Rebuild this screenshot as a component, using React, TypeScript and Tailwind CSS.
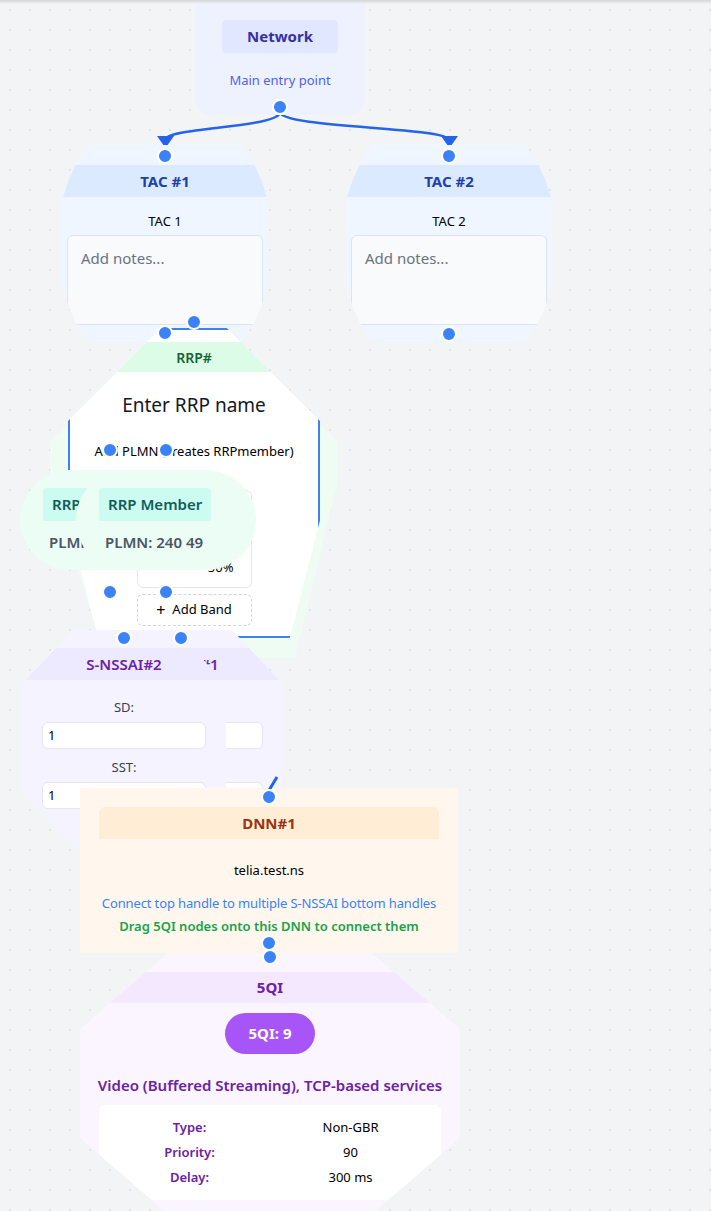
import React from 'react';

const handles: [number, number][] = [
  [280, 107],
  [165, 156],
  [449, 156],
  [165, 333],
  [449, 334],
  [194, 322],
  [110, 450],
  [166, 450],
  [110, 592],
  [166, 592],
  [124, 638],
  [181, 638],
  [269, 797],
  [269, 943],
  [270, 957],
];

function TacNode({ pos, title, label }: { pos: string; title: string; label: string }) {
  return (
    <div
      className={`absolute top-[145px] h-[197px] w-[206px] bg-[#eff6ff] [clip-path:ellipse(108px_140px_at_50%_50%)] ${pos}`}
    >
      <div className="mt-5 flex h-8 items-center justify-center bg-[#dbeafe] text-[15px] font-bold text-[#1e40af]">
        {title}
      </div>
      <div className="mt-[15px] text-center text-[13px] leading-[18px] text-black">{label}</div>
      <div className="mx-[5px] mt-[5px] h-[90px] rounded-md border border-[#dbe4f0] bg-[#f8fafc] px-[13px] pt-[12px] text-[15px] leading-5 text-[#6b7280]">
        Add notes...
      </div>
    </div>
  );
}

function MemberNode({ pos }: { pos: string }) {
  return (
    <div
      className={`absolute top-[470px] flex h-[100px] w-[180px] flex-col items-start rounded-full bg-[#ecfdf5] pl-[23px] pt-[18px] ${pos}`}
    >
      <div className="flex h-[33px] items-center rounded-t-sm bg-[#ccfbf1] px-[9px] text-[15px] font-semibold text-[#115e59]">
        RRP Member
      </div>
      <div className="mt-[11px] pl-[6px] text-[15px] font-semibold leading-5 text-[#4b5563]">PLMN: 240 49</div>
    </div>
  );
}

function SnssaiNode({ pos, title }: { pos: string; title: string }) {
  return (
    <div
      className={`absolute top-[630px] h-[217px] w-[204px] bg-[#f5f3ff] [clip-path:polygon(25%_0,75%_0,100%_25%,100%_75%,75%_100%,25%_100%,0_75%,0_25%)] ${pos}`}
    >
      <div className="mt-[18px] flex h-8 items-center justify-center bg-[#ede9fe] text-[15px] font-semibold text-[#6b21a8]">
        {title}
      </div>
      <div className="flex flex-col px-5 text-[13px]">
        <div className="mt-[18px] text-center leading-[18px] text-[#374151]">SD:</div>
        <div className="mt-[6px] h-[27px] rounded-md border border-[#e5e7eb] bg-white pl-[5px] leading-[25px] text-black">1</div>
        <div className="mt-[9px] text-center leading-[18px] text-[#374151]">SST:</div>
        <div className="mt-[6px] h-[27px] rounded-md border border-[#e5e7eb] bg-white pl-[5px] leading-[25px] text-black">1</div>
      </div>
    </div>
  );
}

export default function App() {
  return (
    <div className="relative h-[1211px] w-[711px] overflow-hidden bg-[#f3f4f6] bg-[radial-gradient(#e1e3e7_1px,transparent_1px)] bg-[size:20px_20px] font-['Noto_Sans',sans-serif]">
      {/* edges under nodes */}
      <svg className="absolute left-0 top-0" width="711" height="1211">
        <path d="M280,112 C280,128 165,127 165,140" fill="none" stroke="#2563eb" strokeWidth="2.5" />
        <path d="M280,112 C280,128 449,127 449,140" fill="none" stroke="#2563eb" strokeWidth="2.5" />
        <polygon points="157,136 174,136 165.5,148" fill="#2563eb" />
        <polygon points="441,136 458,136 449.5,148" fill="#2563eb" />
      </svg>

      {/* Network */}
      <div className="absolute left-[195px] top-[-10px] flex h-[125px] w-[170px] flex-col items-center rounded-2xl bg-[#eef2ff]">
        <div className="mt-[30px] flex h-[33px] w-[116px] items-center justify-center rounded-sm bg-[#e0e7ff] text-[15px] font-bold text-[#3730a3]">
          Network
        </div>
        <div className="mt-[18px] text-[13px] leading-[18px] text-[#4f63ea]">Main entry point</div>
      </div>

      <TacNode pos="left-[62px]" title="TAC #1" label="TAC 1" />
      <TacNode pos="left-[346px]" title="TAC #2" label="TAC 2" />

      {/* RRP */}
      <div className="absolute left-[50px] top-[330px] h-[328px] w-[288px] bg-[#effcf3] [clip-path:polygon(120px_0,170px_0,288px_112px,288px_150px,245px_328px,55px_328px,0_150px,0_112px)]" />
      <div className="absolute left-[68px] top-[328px] flex h-[310px] w-[252px] flex-col border-2 border-[#3b82f6] bg-white text-center [clip-path:polygon(37%_0,63%_0,100%_30%,100%_62%,88%_100%,12%_100%,0_62%,0_30%)]">
        <div className="mt-[12px] flex h-[30px] items-center justify-center bg-[#dcfce7] text-[14px] font-semibold text-[#166534]">
          RRP#
        </div>
        <div className="mt-[20px] text-[19px] leading-[26px] text-[#111827]">Enter RRP name</div>
        <div className="mt-[24px] text-[13px] leading-[18px] text-black">Add PLMN (creates RRPmember)</div>
        <div className="mx-auto mt-[30px] flex h-[98px] w-[115px] flex-col justify-end rounded-md border border-[#e5e7eb] pb-[11px] pr-[17px] text-right text-[13px] leading-[18px] text-black">
          50%
        </div>
        <div className="mx-auto mt-[6px] flex h-8 w-[115px] items-center justify-center gap-[7px] rounded-md border border-dashed border-[#d1d5db] text-[13px] text-black">
          <span className="text-[16px] leading-none">+</span>
          <span>Add Band</span>
        </div>
      </div>

      <MemberNode pos="left-[20px]" />
      <MemberNode pos="left-[76px]" />

      <SnssaiNode pos="left-[79px]" title="S-NSSAI#1" />
      <SnssaiNode pos="left-[22px]" title="S-NSSAI#2" />

      {/* 5QI */}
      <div className="absolute left-[80px] top-[947px] flex h-[273px] w-[380px] flex-col bg-[#faf5ff] text-center [clip-path:polygon(25%_0,75%_0,100%_30%,100%_70%,75%_100%,25%_100%,0_70%,0_30%)]">
        <div className="mt-[25px] flex h-[31px] items-center justify-center bg-[#f3e8ff] text-[15px] font-bold text-[#6b21a8]">
          5QI
        </div>
        <div className="mx-auto mt-[10px] flex h-[41px] w-[90px] items-center justify-center rounded-full bg-[#a855f7] text-[15px] font-bold text-white">
          5QI: 9
        </div>
        <div className="mt-[21px] text-[15px] font-semibold leading-5 text-[#6b21a8]">
          Video (Buffered Streaming), TCP-based services
        </div>
        <div className="mx-[19px] mt-[10px] grid grid-cols-2 rounded-md bg-white p-[10px] text-[13px] leading-[25px]">
          <div className="font-semibold text-[#6b21a8]">Type:</div>
          <div className="text-black">Non-GBR</div>
          <div className="font-semibold text-[#6b21a8]">Priority:</div>
          <div className="text-black">90</div>
          <div className="font-semibold text-[#6b21a8]">Delay:</div>
          <div className="text-black">300 ms</div>
        </div>
      </div>

      {/* DNN */}
      <div className="absolute left-[80px] top-[788px] flex h-[165px] w-[378px] flex-col bg-[#fff7ed] px-[19px] pt-[19px] text-center text-[13px] leading-[18px]">
        <div className="flex h-8 items-center justify-center rounded-t-md bg-[#ffedd5] text-[15px] font-bold text-[#9a3412]">
          DNN#1
        </div>
        <div className="mt-[22px] text-black">telia.test.ns</div>
        <div className="mt-[15px] whitespace-nowrap tracking-[-0.01em] text-[#3b82f6]">
          Connect top handle to multiple S-NSSAI bottom handles
        </div>
        <div className="mt-[5px] whitespace-nowrap font-semibold text-[#16a34a]">
          Drag 5QI nodes onto this DNN to connect them
        </div>
      </div>

      {/* edge drawn above nodes */}
      <svg className="absolute left-0 top-0" width="711" height="1211">
        <line x1="277" y1="777" x2="268" y2="792" stroke="#2563eb" strokeWidth="3" />
      </svg>

      {handles.map(([x, y], i) => (
        <div
          key={i}
          className="absolute -ml-2 -mt-2 h-4 w-4 rounded-full border-2 border-white bg-[#3b82f6]"
          style={{ left: x, top: y }}
        />
      ))}

      <div className="absolute left-0 top-0 h-1 w-full bg-linear-to-b from-[#d6d6d6] to-transparent" />
    </div>
  );
}
